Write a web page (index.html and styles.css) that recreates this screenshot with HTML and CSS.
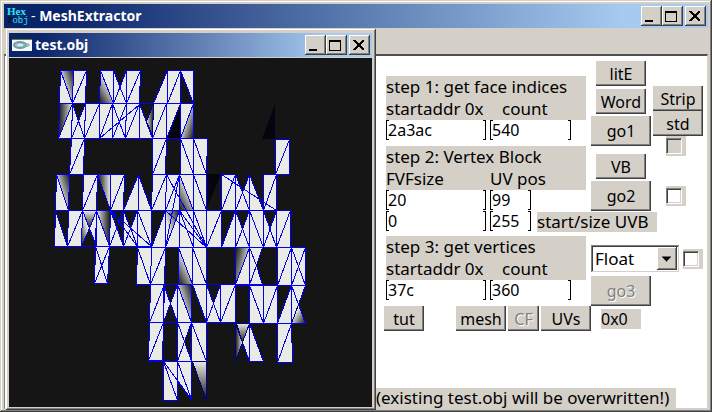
FILE: index.html
```html
<!DOCTYPE html>
<html lang="en">
<head>
<meta charset="utf-8">
<title>MeshExtractor</title>
<link rel="stylesheet" href="styles.css">
</head>
<body>
<div class="window main-window">
  <header class="titlebar">
    <span class="app-icon"><span class="hex">Hex</span><span><b>2</b>obj</span></span>
    <h1><span class="dash">-</span> MeshExtractor</h1>
    <div class="controls">
      <button type="button" aria-label="Minimize"><svg viewBox="0 0 17 16"><path d="M3 12h8v2H3z"/></svg></button>
      <button type="button" aria-label="Maximize"><svg viewBox="0 0 17 16"><path fill-rule="evenodd" d="M2 3h12v11H2zM3 5v8h10V5z"/></svg></button>
      <button type="button" aria-label="Close" class="close"><svg viewBox="0 0 17 16"><path d="M3 3h2l3.500 3.500L12 3h2v1l-4 4 4 4v1h-2L8.500 9.500 5 13H3v-1l4-4-4-4z"/></svg></button>
    </div>
  </header>
  <div class="toolbar"></div>
  <main class="client">
    <form class="form">
      <div class="steps">
        <div class="fields-col first">
          <div class="caption"><p>step 1: get face indices</p><p class="pair"><label for="faddr">startaddr 0x</label><label for="fcount" class="indent">count</label></p></div>
          <div class="row"><input class="box wide" id="faddr" value="2a3ac"><input class="box mid" id="fcount" value="540"></div>
          <div class="caption second"><p>step 2: Vertex Block</p><p class="pair"><label for="fvf">FVFsize</label><label for="uvpos">UV pos</label></p></div>
          <div class="row"><input class="box wide" id="fvf" value="20"><input class="box small" id="uvpos" value="99"></div>
        </div>
        <div class="button-col">
          <button type="button" class="btn">litE</button>
          <button type="button" class="btn word">Word</button>
          <button type="button" class="btn large">go1</button>
          <button type="button" class="btn vb">VB</button>
          <button type="button" class="btn large">go2</button>
        </div>
        <div class="option-col">
          <button type="button" class="btn">Strip</button>
          <button type="button" class="btn">std</button>
          <span class="check"><input type="checkbox" aria-label="std" disabled></span>
          <span class="check lower"><input type="checkbox" aria-label="go2 option"></span>
        </div>
      </div>
      <div class="row uvb">
        <input class="box wide" aria-label="UVB start" value="0"><input class="box small" aria-label="UVB size" value="255">
        <span class="tag">start/size UVB</span>
      </div>
      <div class="steps third">
        <div class="fields-col">
          <div class="caption"><p>step 3: get vertices</p><p class="pair"><label for="vaddr">startaddr 0x</label><label for="vcount" class="indent">count</label></p></div>
          <div class="row"><input class="box wide" id="vaddr" value="37c"><input class="box mid" id="vcount" value="360"></div>
        </div>
        <div class="format-col">
          <div class="format">
            <span class="combo"><select aria-label="Format"><option>Float</option></select><svg viewBox="0 0 20 22"><path d="M5 9h9v1h-1v1h-1v1h-1v1h-1v1h-1v-1H8v-1H7v-1H6v-1H5z"/></svg></span>
            <span class="check"><input type="checkbox" aria-label="Format option"></span>
          </div>
          <button type="button" class="btn large" disabled>go3</button>
        </div>
      </div>
      <div class="actions">
        <button type="button" class="btn tut">tut</button>
        <button type="button" class="btn">mesh</button>
        <button type="button" class="btn narrow" disabled>CF</button>
        <button type="button" class="btn">UVs</button>
        <output class="tag result">0x0</output>
      </div>
      <p class="status">(existing test.obj will be overwritten!)</p>
    </form>
  </main>
</div>

<section class="window mesh-window">
  <header class="titlebar">
    <svg class="gl-icon" viewBox="0 0 20 12"><rect width="20" height="12" fill="#f4f8f8"/><path d="M0 0h20v1H0z" fill="#6d7838"/><ellipse cx="8" cy="6" rx="6" ry="3" fill="#a4cdd3" stroke="#6d9ca5" stroke-width="2"/><path d="M8 6h10M9 4l8 1M10 8l7-1" stroke="#7fa9b0" fill="none"/><path d="M6 6h5" stroke="#dcecee" stroke-width="2"/></svg>
    <h2>test.obj</h2>
    <div class="controls">
      <button type="button" aria-label="Minimize"><svg viewBox="0 0 17 16"><path d="M3 12h8v2H3z"/></svg></button>
      <button type="button" aria-label="Maximize"><svg viewBox="0 0 17 16"><path fill-rule="evenodd" d="M2 3h12v11H2zM3 5v8h10V5z"/></svg></button>
      <button type="button" aria-label="Close" class="close"><svg viewBox="0 0 17 16"><path d="M3 3h2l3.500 3.500L12 3h2v1l-4 4 4 4v1h-2L8.500 9.500 5 13H3v-1l4-4-4-4z"/></svg></button>
    </div>
  </header>
  <svg class="mesh" viewBox="9 58 363 349" preserveAspectRatio="xMinYMin slice">
    <defs>
      <linearGradient id="fromLeft"><stop offset="0" stop-color="#151515"/><stop offset="1" stop-color="#ebebe6"/></linearGradient>
      <linearGradient id="fromRight"><stop offset="0" stop-color="#ebebe6"/><stop offset="1" stop-color="#151515"/></linearGradient>
      <linearGradient id="fromTopRight" x1="1" y1="0" x2="0.300" y2="0.600"><stop offset="0" stop-color="#151515"/><stop offset="1" stop-color="#ebebe6"/></linearGradient>
      <linearGradient id="fromTopLeft" x1="0" y1="0" x2="0.900" y2="0.500"><stop offset="0" stop-color="#151515"/><stop offset="1" stop-color="#ebebe6"/></linearGradient>
      <linearGradient id="fromBottomLeft" x1="0" y1="1" x2="0.500" y2="0.300"><stop offset="0" stop-color="#151515"/><stop offset="1" stop-color="#ebebe6"/></linearGradient>
      <linearGradient id="fromBottomRight" x1="1" y1="1" x2="0.300" y2="0.400"><stop offset="0" stop-color="#151515"/><stop offset="1" stop-color="#ebebe6"/></linearGradient>
      <linearGradient id="fromBottom" x1="0" y1="1" x2="0" y2="0"><stop offset="0" stop-color="#151515"/><stop offset="1" stop-color="#ebebe6"/></linearGradient>
    </defs>
    <g class="void"><path d="M275 104v35h-13zM207 174h14l-15 36zM180 103v35h-14z"/></g>
    <g class="faces" transform="translate(.5 .5)">
      <!-- y 70 to 103 -->
      <path d="M60 70L72 103H59zM73 70H86L85 103H72zL73 70M86 70L72 103M100 70H113V103zM113 70L126 103H113zM126 70V103H113zM126 70H140L139 103H126zM140 70L126 103M167 70V103H153zM167 70H180V103H167zM180 70L167 103M180 70H193V103z"/>
      <path fill="url(#fromTopRight)" d="M60 70H73L72 103z"/>
      <path fill="url(#fromBottomLeft)" d="M100 70L113 103H99z"/>
      <!-- y 103 to 138 -->
      <path d="M72 103L71 138H58zM72 103L84 138H71zM85 103L84 138H71zM85 103H99V138H84zM99 103L84 138M99 103H112V138H99zM112 103L99 138M112 103H126L125 138H112zM112 103L125 138M126 103L112 138M126 103H139V138H125zM139 103L125 138M139 104L99 138M139 103L152 138H139zM153 103H166V138H152zM166 103L152 138M166 103H180L166 138zM180 103H193L180 138z"/>
      <path fill="url(#fromLeft)" d="M59 103H72L58 138z"/>
      <path class="soft" fill="url(#fromRight)" d="M153 103L152 135L146 121z"/>
      <path fill="url(#fromBottomRight)" d="M193 103V138H180z"/>
      <!-- y 138 to 174 -->
      <path d="M71 138H84L83 174H69zM84 138L69 174M152 138H166L165 174H152zM166 138L152 174M180 138H193V174H180zL193 174M193 138H207L206 174H193zL206 174M275 139H289V174H275zM289 139L275 174"/>
      <!-- y 174 to 210 -->
      <path d="M56 174L68 210H55zM83 174H97L96 210H82zM97 174L82 210M110 174H124L123 210H110zM124 174L110 210M138 174L123 210H151zV210M152 174H166L165 210H151zM166 174L151 210M166 174H179V210H165zM179 174L165 210M179 174H193V210zM193 174H206V210H193zL206 210M221 174H235V210H221zM235 174L221 210M235 174L249 210H235zM249 174V210H235zM249 174L263 210H249zM263 174H276V210H263zM276 174L263 210M221 174L276 210"/>
      <path fill="url(#fromTopRight)" d="M56 174H69L68 210z"/>
      <path fill="url(#fromLeft)" d="M97 174H110V210z"/>
      <path fill="url(#fromBottomLeft)" d="M179 174L193 210H179z"/>
      <!-- y 210 to 246 -->
      <path d="M55 210L67 246H54zM68 210H82L81 246H67zM82 210L67 246M96 210V246L89 228zM96 210L109 246H95zM110 210L123 246H109zM123 210L137 246H123zM137 210V246H123zM137 210H151V246H137zL151 246M165 210V247H151zM179 210V247H165zM179 210H193V247H179zL193 247M193 210H206V247H193zL206 247M206 210H221V247H206zM221 210L206 247M235 210L249 247H221zV247M249 210V247H235zM249 210H263V247H249zL263 247M263 210L276 247H263zM276 210V247H263zM276 210H290V247H276zM290 210L276 247"/>
      <path fill="url(#fromBottom)" d="M82 210H96L89 228z"/>
      <path fill="url(#fromBottomLeft)" d="M82 210L89 228L81 246z"/>
      <path fill="url(#fromRight)" d="M96 210H110L109 246z"/>
      <path fill="url(#fromTopRight)" d="M165 210H179L165 247z"/>
      <path class="line" d="M110 210L151 246M110 210L137 246M123 210L109 246M165 210L206 247M179 210L206 247M166 174L206 247M179 174L165 247M55 210H290M54 246H137M137 247H290M58 103H193M58 138H207"/>
      <!-- y 247 to 284 -->
      <path d="M95 246H109L107 283H94zL107 283M109 246L94 283M137 247H151L150 284H136zL150 284M151 247H165L164 284H150zM165 247L150 284M178 247L192 284V247zM192 247H206V284H192zL206 284M249 247V284H235zM249 247H262L256 265L262 284H249zM249 247L256 265L249 284M277 247H291V285H277zM291 247L277 285M291 247H305V285H291zL305 285M305 247L291 285"/>
      <path fill="url(#fromBottomLeft)" d="M178 247L192 284H178z"/>
      <path fill="url(#fromTopLeft)" d="M235 247H249L235 284z"/>
      <!-- y 284 to 322 -->
      <path d="M150 284H164L163 322H149zM164 284L149 322M163 284H177L170 303L177 322V284M163 284L170 303L163 322zM177 284L191 322H177zM192 284H206V322zM206 284L220 322H206zM220 284V322H206zM220 284H235V322H220zM235 284L220 322M249 285H263V323H249zL263 323M263 285H277V323H263zM277 285L263 323M291 285V323H277zM291 285H305L291 323z"/>
      <path fill="url(#fromTopRight)" d="M177 284H191V322z"/>
      <path class="soft" fill="url(#fromBottomRight)" d="M298 304L305 323H291z"/>
      <path class="line" d="M291 285L305 323M150 284H235M235 285H305M149 322H235M249 323H305"/>
      <!-- y 322 to 361 -->
      <path d="M149 322H163L162 360H148zM163 322L148 360M177 322H191L184 341L191 361H177zL184 341L177 361M191 322H206V361H191zL206 361M235 323H249V361L242 342zM249 323L263 361H249zM277 323H291L292 362H277zM291 323L277 362"/>
      <path class="soft" fill="url(#fromLeft)" d="M235 323L242 342L235 361z"/>
      <path class="soft" fill="url(#fromBottom)" d="M236 323H249L242 342z"/>
      <!-- y 361 to 400 -->
      <path d="M163 361H177V400H163zL177 400M177 361H191V399zM177 361V381L191 399zM163 361L191 399M148 361H206"/>
      <path class="soft" fill="url(#fromBottom)" d="M192 361H206V400z"/>
    </g>
  </svg>
</section>
</body>
</html>
```

FILE: styles.css
```css
* { box-sizing: border-box; }

body {
  margin: 0;
  background: #d4d0c8;
  color: #000;
  font: 17px/22px "Noto Sans", "Open Sans", sans-serif;
}

h1, h2, p { margin: 0; }

button, input, select { font: inherit; color: inherit; }

.window {
  display: flex;
  flex-direction: column;
  background: #d4d0c8;
}

.main-window {
  min-height: 100vh;
  padding: 4px 4px 3px;
  box-shadow: inset -1px -1px #404040, inset 1px 1px #d4d0c8, inset -2px -2px #808080, inset 2px 2px #fff;
}

.mesh-window {
  position: absolute;
  top: 29px;
  left: 6px;
  bottom: 2px;
  width: 370px;
  padding: 4px 4px 3px 3px;
  box-shadow: inset -1px -1px #404040, inset 1px 1px #fff, inset -2px -2px #808080;
}

/* Title bars */
.titlebar {
  display: flex;
  align-items: center;
  height: 24px;
  padding: 0 2px 0 3px;
  background: linear-gradient(90deg, #0a246a 8%, #a6caf0 88%);
  color: #fff;
}

.titlebar h1, .titlebar h2 {
  flex: 1;
  font: bold 14px/24px "Noto Sans", "Open Sans", sans-serif;
}

.dash { font-weight: normal; }

.app-icon {
  display: flex;
  flex-direction: column;
  width: 20px;
  margin-right: 4px;
  color: #2fe6f0;
  font: 9px/10px "Liberation Mono", monospace;
}

.hex {
  font-family: "Liberation Serif", serif;
  font-size: 11px;
  font-weight: bold;
}

.app-icon b { color: #101010; }

.gl-icon {
  width: 20px;
  height: 12px;
  margin-right: 3px;
}

.controls { display: flex; }

.controls button {
  width: 21px;
  height: 20px;
  padding: 1px;
  border: 0;
  background: #d4d0c8;
  box-shadow: inset -1px -1px #404040, inset 1px 1px #fff, inset -2px -2px #808080;
}

.controls .close { margin-left: 2px; }

.controls svg {
  display: block;
  width: 17px;
  height: 16px;
  shape-rendering: crispEdges;
}

/* Mesh view */
.mesh {
  flex: 1;
  min-height: 0;
  margin-top: 1px;
  background: #151515;
}

.faces {
  fill: #ebebe6;
  stroke: #00e;
  stroke-width: 1px;
  shape-rendering: crispEdges;
}

.faces .line { fill: none; }

.faces .soft { stroke: #00008a; }

.void { fill: #05050f; }

/* Main window body */
.toolbar { height: 26px; }

.client {
  display: flex;
  flex: 1;
  padding-left: 371px;
  border: 1px solid #808080;
  border-top: 2px solid #505050;
  border-right: 1px solid #d4d0c8;
  border-bottom: 1px solid #d4d0c8;
  background: #fff;
}

.form {
  display: flex;
  flex: 1;
  flex-direction: column;
  padding-top: 5px;
}

.steps {
  display: flex;
  gap: 5px;
  padding-left: 10px;
}

.fields-col { width: 200px; }

.first { padding-top: 15px; }

.caption {
  height: 44px;
  background: #d4d0c8;
  white-space: nowrap;
}

.second { margin-top: 6px; }

.pair {
  display: grid;
  grid-template-columns: 104px 1fr;
}

.indent { padding-left: 12px; }

.row {
  display: flex;
  gap: 4px;
}

.box {
  height: 20px;
  padding: 0 1px;
  border: solid #000;
  border-width: 0 1px;
  background:
    linear-gradient(#000, #000) 0 0 / 2px 1px,
    linear-gradient(#000, #000) 0 100% / 2px 1px,
    linear-gradient(#000, #000) 100% 0 / 2px 1px,
    linear-gradient(#000, #000) 100% 100% / 2px 1px;
  background-repeat: no-repeat;
  font-size: 16px;
  line-height: 20px;
}

.wide { width: 100px; }
.mid { width: 81px; }
.small { width: 41px; }

.button-col {
  display: flex;
  flex-direction: column;
  align-items: center;
  gap: 2px;
  width: 60px;
}

.word { margin-top: 1px; }
.vb { margin-top: 6px; }

.option-col {
  display: flex;
  flex-direction: column;
  align-items: center;
  margin-left: -3px;
  padding-top: 25px;
}

.btn {
  width: 50px;
  height: 25px;
  padding: 0;
  border: 0;
  background: #d4d0c8;
  box-shadow: inset -1px -1px #404040, inset -2px -2px #808080;
  font-size: 16px;
  line-height: 22px;
  white-space: nowrap;
}

.large {
  width: 60px;
  height: 30px;
}

.btn:disabled {
  color: #808080;
  text-shadow: 1px 1px #fff;
}

.check {
  display: flex;
  align-items: center;
  width: 20px;
  height: 20px;
  background: #d4d0c8;
}

.option-col .check { margin-right: 4px; }

.option-col .lower { margin-top: 30px; }

.check input {
  appearance: none;
  width: 16px;
  height: 16px;
  margin: 0;
  border: 1px solid #808080;
  border-right-color: #fff;
  border-bottom-color: #fff;
  background: #fff;
  box-shadow: inset 1px 1px #404040, inset -1px -1px #d4d0c8;
}

.check input:disabled { background: #d4d0c8; }

.uvb { padding-left: 10px; }

.tag {
  height: 20px;
  background: #d4d0c8;
  line-height: 20px;
}

.uvb .tag {
  width: 120px;
  margin: 1px 0 0 2px;
}

.third { margin-top: 4px; }

.format-col {
  display: flex;
  flex-direction: column;
  gap: 4px;
  padding-top: 9px;
}

.format {
  display: flex;
  align-items: center;
  gap: 4px;
}

.combo {
  display: grid;
  grid-template-columns: 1fr 20px;
  width: 88px;
  height: 27px;
  padding: 2px;
  background: #fff;
  box-shadow: inset 1px 1px #808080, inset -1px -1px #d4d0c8, inset 2px 2px #404040;
}

.combo select {
  grid-area: 1 / 1 / 2 / 3;
  appearance: none;
  padding: 0 2px;
  border: 0;
  background: none;
}

.combo svg {
  grid-area: 1 / 2;
  width: 20px;
  height: 23px;
  background: #d4d0c8;
  box-shadow: inset -1px -1px #404040, inset 1px 1px #fff, inset -2px -2px #808080;
  pointer-events: none;
}

.actions {
  display: flex;
  gap: 2px;
  padding-left: 8px;
}

.tut {
  width: 40px;
  margin-right: 30px;
}

.narrow { width: 31px; }

.result {
  width: 40px;
  margin: 3px 0 0 8px;
  font-size: 16px;
}

.status {
  width: 300px;
  height: 20px;
  margin-top: auto;
  background: #d4d0c8;
  line-height: 20px;
  white-space: nowrap;
}
```
